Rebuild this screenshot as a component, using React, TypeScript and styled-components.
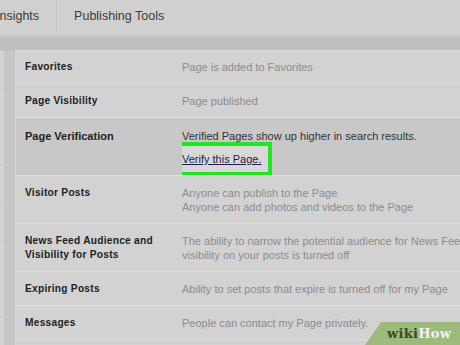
import styled, { createGlobalStyle } from "styled-components";

const GlobalStyle = createGlobalStyle`
  html, body {
    margin: 0;
    padding: 0;
    width: 460px;
    height: 345px;
    overflow: hidden;
    background: #d0d0d0;
    font-family: "Liberation Sans", Arial, sans-serif;
  }
`;

const rows = [
  { label: "Favorites", value: ["Page is added to Favorites"] },
  { label: "Page Visibility", value: ["Page published"] },
  { label: "Page Verification", verify: true },
  {
    label: "Visitor Posts",
    value: ["Anyone can publish to the Page", "Anyone can add photos and videos to the Page"],
  },
  {
    label: "News Feed Audience and Visibility for Posts",
    value: [
      "The ability to narrow the potential audience for News Feed and limit the",
      "visibility on your posts is turned off",
    ],
  },
  { label: "Expiring Posts", value: ["Ability to set posts that expire is turned off for my Page"] },
  { label: "Messages", value: ["People can contact my Page privately."] },
  { label: "Tagging Ability", value: ["Only people who help manage my Page can tag photos"] },
];

const App = () => {
  return (
    <>
      <GlobalStyle />
      <Screen>
        <TopBar>
          <Tab>Insights</Tab>
          <Divider />
          <Tab>Publishing Tools</Tab>
          <Spacer />
          <Tab $right>Settings</Tab>
        </TopBar>
        <Strip />
        <Body>
          <SideNav>
            {Array.from({ length: 9 }).map((_, i) => (
              <SideItem key={i} />
            ))}
          </SideNav>
          <Rail />
          <Panel>
            {rows.map((row) => (
              <Row key={row.label} $active={!!row.verify}>
                <Label $big={!!row.verify}>{row.label}</Label>
                {row.verify ? (
                  <Value $dark>
                    <div>Verified Pages show up higher in search results.</div>
                    <Highlight>
                      <VerifyLink href="#">Verify this Page.</VerifyLink>
                    </Highlight>
                  </Value>
                ) : (
                  <Value>
                    {row.value?.map((line) => (
                      <div key={line}>{line}</div>
                    ))}
                  </Value>
                )}
              </Row>
            ))}
          </Panel>
        </Body>
        <Watermark>
          <WikiText>wiki</WikiText>
          <HowText>How</HowText>
        </Watermark>
      </Screen>
    </>
  );
};

export default App;

const Screen = styled.div`
  position: relative;
  width: 460px;
  height: 345px;
  overflow: hidden;
  background: #d0d0d0;
`;

const TopBar = styled.div`
  height: 35px;
  display: flex;
  align-items: stretch;
  background: #d0d0d0;
  border-bottom: 1px solid #c4c4c4;
  margin-left: -4px;
  margin-right: -50px;
`;

const Tab = styled.div<{ $right?: boolean }>`
  display: flex;
  align-items: center;
  padding: 0 ${(p) => (p.$right ? "0" : "16px")} 4px 0;
  font-size: 12.5px;
  color: #3c3c3c;
  white-space: nowrap;
  &:nth-child(3) {
    padding-left: 17px;
  }
`;

const Divider = styled.div`
  width: 1px;
  margin: 0 0 3px 1px;
  background: #c2c2c2;
  box-shadow: 1px 0 0 #d8d8d8;
`;

const Spacer = styled.div`
  flex: 1;
`;

const Strip = styled.div`
  height: 13px;
  background: #bebebe;
  border-top: 1px solid #cbcbcb;
`;

const Body = styled.div`
  display: flex;
  align-items: flex-start;
`;

const SideNav = styled.div`
  width: 4px;
  flex-shrink: 0;
  display: flex;
  flex-direction: column;
  background: #d3d3d3;
`;

const SideItem = styled.div`
  height: 37px;
  border-top: 1px solid #c6c6c6;
`;

const Rail = styled.div`
  width: 10px;
  flex-shrink: 0;
  height: 300px;
  background: #c6c6c6;
  border-right: 1px solid #bcbcbc;
`;

const Panel = styled.div`
  flex: 1;
  min-width: 0;
  background: #d2d2d2;
  border-top: 1px solid #dcdcdc;
  border-left: 1px solid #dadada;
`;

const Row = styled.div<{ $active: boolean }>`
  display: grid;
  grid-template-columns: 166px 1fr;
  padding: ${(p) => (p.$active ? "10px 0 0" : "10px 0 9px")};
  background: ${(p) => (p.$active ? "#c8c8c8" : "#d2d2d2")};
  border-bottom: 1px solid #dfdfdf;
  white-space: nowrap;
  &:first-child {
    padding-top: 9px;
  }
`;

const Label = styled.div<{ $big: boolean }>`
  padding-left: 9px;
  padding-top: ${(p) => (p.$big ? "1px" : "0")};
  font-size: ${(p) => (p.$big ? "11px" : "10.2px")};
  letter-spacing: ${(p) => (p.$big ? "0" : "0.25px")};
  font-weight: bold;
  line-height: 14px;
  color: #222;
  white-space: normal;
  padding-right: 4px;
`;

const Value = styled.div<{ $dark?: boolean }>`
  font-size: 11px;
  line-height: 14px;
  color: ${(p) => (p.$dark ? "#333" : "#8c8c8c")};
  overflow: hidden;
  padding-top: ${(p) => (p.$dark ? "1px" : "0")};
`;

const Highlight = styled.div`
  display: block;
  width: fit-content;
  margin: -1px 0 -1px -9px;
  padding: 6px 6px 6px 5px;
  border: 4px solid #21e621;
  background: #d8d8d8;
`;

const VerifyLink = styled.a`
  display: block;
  color: #1d1d50;
  text-decoration: underline;
  font-size: 11px;
  line-height: 14px;
`;

const Watermark = styled.div`
  position: absolute;
  left: 365px;
  bottom: 0;
  width: 95px;
  height: 23px;
  background: #9cba7c;
  clip-path: polygon(16px 0, 100% 0, 100% 100%, 0 100%);
  display: flex;
  align-items: center;
  padding-left: 22px;
  box-sizing: border-box;
  font-family: "DejaVu Serif", "Liberation Serif", serif;
  font-weight: bold;
  font-size: 13px;
  letter-spacing: 0.3px;
`;

const WikiText = styled.span`
  color: #3b4a2e;
`;

const HowText = styled.span`
  color: #f2f2f2;
`;
